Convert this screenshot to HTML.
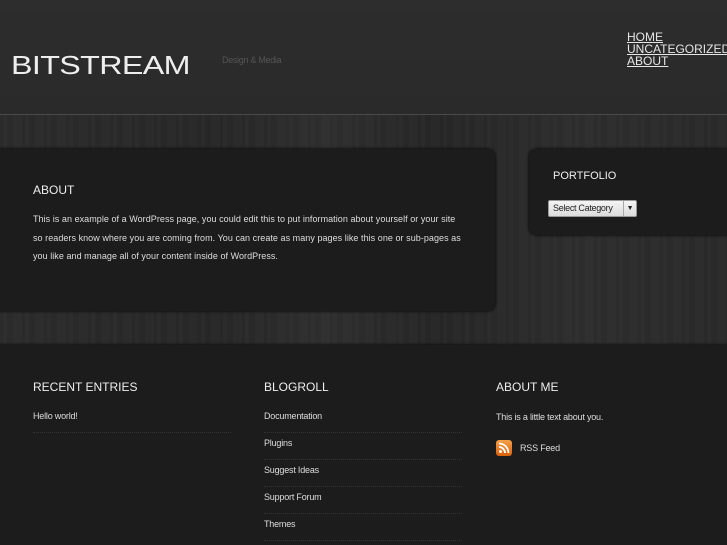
<!DOCTYPE html>
<html><head><meta charset="utf-8"><style>
*{margin:0;padding:0;box-sizing:border-box}
html,body{width:727px;height:545px;overflow:hidden}
body{background:#2b2b2b;font-family:"Liberation Sans",sans-serif;color:#e6e6e6;position:relative;
background-image:repeating-linear-gradient(90deg,rgba(0,0,0,.03) 0 3px,rgba(255,255,255,.01) 3px 7px,rgba(0,0,0,.02) 7px 13px,rgba(255,255,255,.008) 13px 22px),linear-gradient(90deg,#2c2c2c,#282828 30%,#2f2f2f 45%,#272727 60%,#2e2e2e 80%,#2a2a2a);}
.hdr{position:absolute;left:0;top:0;width:727px;height:115px;border-bottom:1px solid #4a4a4a;background:linear-gradient(#2d2d2d,#2a2a2a)}
.logo{position:absolute;left:11px;top:50px;font-size:26px;letter-spacing:-0.5px;color:#eee;transform:scaleX(1.24);transform-origin:left}
.tag{position:absolute;left:222px;top:55px;font-size:9px;color:#555;letter-spacing:-0.3px}
.nav{position:absolute;left:627px;top:31px;font-size:12px;line-height:12px}
.nav a{display:block;color:#e6e6e6;text-decoration:underline}
.panel{position:absolute;background:#1c1c1c;border-radius:8px;box-shadow:0 0 3px #000}
h2{font-weight:normal;font-size:12px;color:#eee}
p{font-size:9px;color:#ddd;letter-spacing:-0.2px}
.li{font-size:9px;color:#ddd;border-bottom:1px dotted #333;height:27px;padding-top:5px;letter-spacing:-0.2px}
</style></head><body>
<div class="hdr"></div>
<div class="logo">BITSTREAM</div>
<div class="tag">Design &amp; Media</div>
<div class="nav"><a>HOME</a><a>UNCATEGORIZED</a><a>ABOUT</a></div>

<div class="panel" style="left:-6px;top:149px;width:501px;height:162px">
<h2 style="position:absolute;left:39px;top:34px">ABOUT</h2>
<p style="position:absolute;left:39px;top:61px;white-space:nowrap;line-height:18.5px;letter-spacing:0.05px">This is an example of a WordPress page, you could edit this to put information about yourself or your site<br>so readers know where you are coming from. You can create as many pages like this one or sub-pages as<br>you like and manage all of your content inside of WordPress.</p>
</div>

<div class="panel" style="left:529px;top:149px;width:204px;height:86px">
<h2 style="position:absolute;left:24px;top:21px;font-size:11px">PORTFOLIO</h2>
<div style="position:absolute;left:19px;top:51px;width:89px;height:17px;background:linear-gradient(#f4f4f4,#dcdcdc);border:1px solid #999;border-radius:2px;font-size:9px;color:#222;line-height:15px;padding-left:4px;letter-spacing:-0.3px">Select Category<span style="position:absolute;right:0;top:0;width:13px;height:15px;border-left:1px solid #aaa;font-size:7px;text-align:center">▼</span></div>
</div>

<div class="panel" style="left:-6px;top:345px;width:739px;height:200px;border-bottom-left-radius:0;border-bottom-right-radius:0">
<div style="position:absolute;left:39px;top:35px;width:198px">
<h2>RECENT ENTRIES</h2>
<div style="margin-top:12px" class="li">Hello world!</div>
</div>
<div style="position:absolute;left:270px;top:35px;width:198px">
<h2>BLOGROLL</h2>
<div style="margin-top:12px" class="li">Documentation</div>
<div class="li">Plugins</div>
<div class="li">Suggest Ideas</div>
<div class="li">Support Forum</div>
<div class="li">Themes</div>
</div>
<div style="position:absolute;left:502px;top:35px;width:200px">
<h2>ABOUT ME</h2>
<p style="margin-top:18px">This is a little text about you.</p>
<div style="position:absolute;top:60px;left:0;width:16px;height:16px;border-radius:3px;background:linear-gradient(#f5a04a,#d8600c)"><svg width="16" height="16" viewBox="0 0 16 16"><circle cx="4.5" cy="11.5" r="1.5" fill="#fff"/><path d="M3 7a6 6 0 0 1 6 6M3 3.5a9.5 9.5 0 0 1 9.5 9.5" stroke="#fff" stroke-width="1.8" fill="none"/></svg></div>
<p style="position:absolute;top:63px;left:24px">RSS Feed</p>
</div>
</div>
</body></html>
